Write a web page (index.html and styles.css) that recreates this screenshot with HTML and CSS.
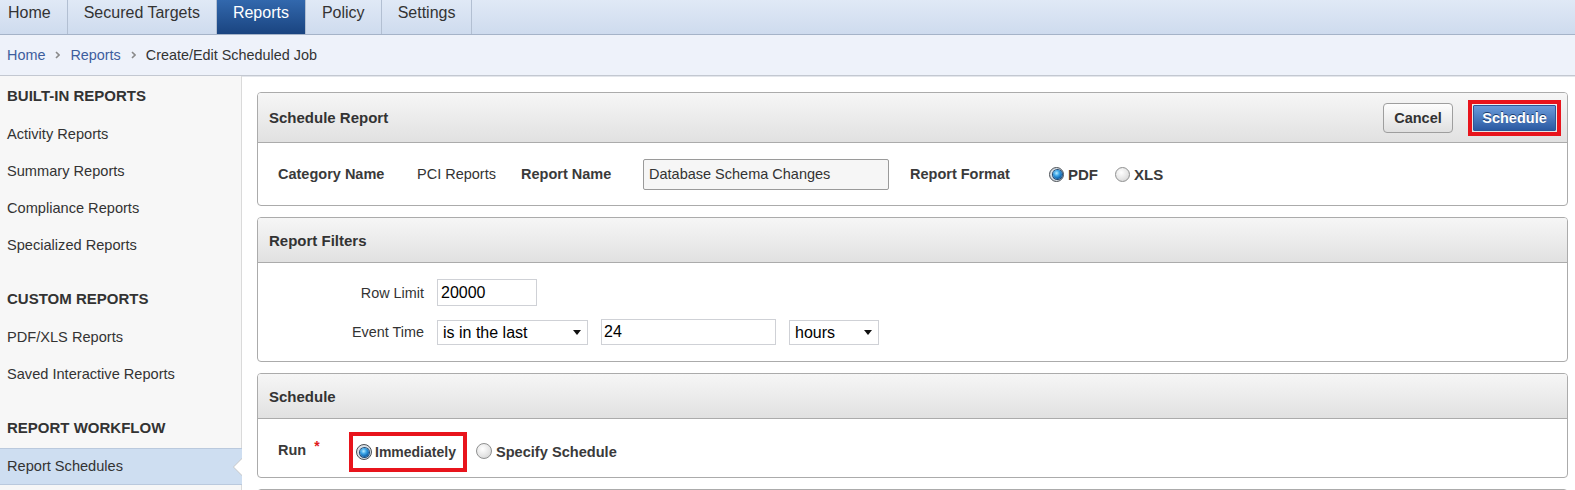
FILE: index.html
```html
<!DOCTYPE html>
<html lang="en">
<head>
<meta charset="utf-8">
<title>Create/Edit Scheduled Job</title>
<link rel="stylesheet" href="styles.css">
</head>
<body>
<nav class="topnav">
  <a class="tab tab-first">Home</a>
  <a class="tab">Secured Targets</a>
  <a class="tab tab-active">Reports</a>
  <a class="tab">Policy</a>
  <a class="tab">Settings</a>
</nav>
<div class="crumbs">
  <a class="crumb-link">Home</a>
  <svg class="chev" width="5" height="8" viewBox="0 0 5 8"><path d="M1 1 L4 4 L1 7" fill="none" stroke="#8a8a8a" stroke-width="1.6"/></svg>
  <a class="crumb-link">Reports</a>
  <svg class="chev" width="5" height="8" viewBox="0 0 5 8"><path d="M1 1 L4 4 L1 7" fill="none" stroke="#8a8a8a" stroke-width="1.6"/></svg>
  <span class="crumb-current">Create/Edit Scheduled Job</span>
</div>
<div class="layout">
  <aside class="sidebar">
    <section class="side-section">
      <div class="side-head">BUILT-IN REPORTS</div>
      <a class="side-item">Activity Reports</a>
      <a class="side-item">Summary Reports</a>
      <a class="side-item">Compliance Reports</a>
      <a class="side-item">Specialized Reports</a>
    </section>
    <section class="side-section">
      <div class="side-head">CUSTOM REPORTS</div>
      <a class="side-item">PDF/XLS Reports</a>
      <a class="side-item">Saved Interactive Reports</a>
    </section>
    <section class="side-section">
      <div class="side-head">REPORT WORKFLOW</div>
      <a class="side-item side-active">Report Schedules</a>
    </section>
  </aside>
  <main class="content">
    <div class="panel">
      <div class="panel-head head-actions">
        <span class="panel-title">Schedule Report</span>
        <div class="actions">
          <button class="btn btn-cancel">Cancel</button>
          <span class="mark-box"><button class="btn btn-primary">Schedule</button></span>
        </div>
      </div>
      <div class="panel-body body-row">
        <span class="lbl cat-label">Category Name</span>
        <span class="cat-value">PCI Reports</span>
        <span class="lbl name-label">Report Name</span>
        <input class="name-input" type="text" value="Database Schema Changes">
        <span class="lbl format-label">Report Format</span>
        <span class="radio radio-on fmt-radio"></span><span class="lbl fmt-text">PDF</span>
        <span class="radio fmt-radio radio-gap"></span><span class="lbl fmt-text">XLS</span>
      </div>
    </div>
    <div class="panel">
      <div class="panel-head">
        <span class="panel-title">Report Filters</span>
      </div>
      <div class="panel-body filters">
        <label class="flabel">Row Limit</label>
        <div class="frow"><input class="field field-limit" type="text" value="20000"></div>
        <label class="flabel">Event Time</label>
        <div class="frow">
          <span class="select-wrap sel-op"><select class="field select"><option>is in the last</option></select></span>
          <input class="field field-num" type="text" value="24">
          <span class="select-wrap sel-unit"><select class="field select"><option>hours</option></select></span>
        </div>
      </div>
    </div>
    <div class="panel">
      <div class="panel-head">
        <span class="panel-title">Schedule</span>
      </div>
      <div class="panel-body run-row">
        <span class="lbl run-label">Run <span class="req">*</span></span>
        <span class="highlight">
          <span class="radio radio-on"></span><span class="lbl radio-text">Immediately</span>
        </span>
        <span class="radio radio-after"></span><span class="lbl radio-text specify">Specify Schedule</span>
      </div>
    </div>
    <div class="panel">
      <div class="panel-head"></div>
    </div>
  </main>
</div>
</body>
</html>
```

FILE: styles.css
```css
* { box-sizing: border-box; }

body {
  margin: 0;
  font-family: "Liberation Sans", Arial, sans-serif;
  font-size: 14px;
  color: #333;
  background: #fff;
}

/* top navigation */
.topnav {
  display: flex;
  height: 35px;
  background: linear-gradient(#e0e9f6, #cedbee);
  border-bottom: 1px solid #a5b3c8;
}
.tab {
  padding: 0 16px;
  line-height: 26px;
  font-size: 16px;
  color: #333;
  border-right: 1px solid #b2bfd2;
  text-decoration: none;
}
.tab-first { padding-left: 8px; }
.tab-active {
  background: linear-gradient(#3268ad, #1a4480);
  color: #fff;
}

/* breadcrumb */
.crumbs {
  height: 41px;
  display: flex;
  align-items: center;
  gap: 9px;
  padding-left: 7px;
  font-size: 14.4px;
  background: #eef2fa;
  border-bottom: 1px solid #c3c8d1;
  box-shadow: 0 1px 0 #e3e6eb;
}
.crumb-link { color: #3d5d9d; text-decoration: none; }
.crumb-current { color: #333; }
.chev { display: block; margin: 0 1px; }

/* layout */
.layout { display: flex; }

.sidebar {
  width: 242px;
  flex: none;
  min-height: calc(100vh - 76px);
  background: #f7f7f7;
  border-right: 1px solid #dadada;
}
.side-section + .side-section { margin-top: 15px; }
.side-head {
  height: 40px;
  line-height: 40px;
  padding-left: 7px;
  font-size: 15px;
  font-weight: bold;
  color: #333;
}
.side-item {
  display: block;
  height: 37px;
  line-height: 37px;
  padding-left: 7px;
  font-size: 14.6px;
  color: #333;
  text-decoration: none;
}
.side-active {
  position: relative;
  margin-right: -1px;
  line-height: 35px;
  background: #cedef1;
  border-top: 1px solid #bac9dd;
  border-bottom: 1px solid #bac9dd;
}
.side-active::before,
.side-active::after {
  content: "";
  position: absolute;
  top: 50%;
  width: 0;
  height: 0;
  border-style: solid;
  border-color: transparent;
}
.side-active::before {
  right: 0;
  margin-top: -9px;
  border-width: 9px 9px 9px 0;
  border-right-color: #c8c8c8;
}
.side-active::after {
  right: 0;
  margin-top: -8px;
  border-width: 8px 8px 8px 0;
  border-right-color: #fff;
}

/* main content */
.content {
  flex: 1;
  min-width: 0;
  padding: 16px 7px 0 15px;
  display: flex;
  flex-direction: column;
  gap: 11px;
}

.panel {
  border: 1px solid #ababab;
  border-radius: 4px;
  background: #fff;
}
.panel-head {
  height: 45px;
  display: flex;
  align-items: center;
  justify-content: space-between;
  padding: 0 11px;
  background: linear-gradient(#f6f6f6, #e1e1e1);
  border-bottom: 1px solid #ababab;
  border-radius: 3px 3px 0 0;
}
.head-actions { height: 50px; }
.panel-title { font-size: 15px; font-weight: bold; color: #333; }

.actions { display: flex; align-items: center; gap: 15px; margin-right: -5px; }
.btn {
  font-family: "Liberation Sans", Arial, sans-serif;
  font-size: 14.5px;
  font-weight: bold;
  padding: 0;
  cursor: pointer;
}
.btn-cancel {
  width: 70px;
  height: 30px;
  color: #333;
  background: linear-gradient(#fdfdfd, #e0e0e0);
  border: 1px solid #9e9e9e;
  border-radius: 4px;
}
.mark-box {
  display: block;
  margin-top: 1px;
  padding: 1px;
  border: 4px solid #e8141c;
}
.btn-primary {
  display: block;
  width: 83px;
  height: 26px;
  color: #fff;
  background: linear-gradient(#6a9bda, #2b5aa2);
  border: 1px solid #2d5796;
  border-radius: 1px;
  text-shadow: 0 -1px 0 #1d3f70;
}

/* panel 1 body */
.body-row {
  height: 62px;
  display: flex;
  align-items: center;
  padding-left: 20px;
  font-size: 14.5px;
}
.lbl { font-weight: bold; color: #3a3a3a; }
.cat-label { width: 139px; }
.cat-value { width: 104px; color: #333; }
.name-label { width: 122px; }
.name-input {
  width: 246px;
  height: 31px;
  padding: 0 5px;
  font-family: "Liberation Sans", Arial, sans-serif;
  font-size: 14.5px;
  color: #333;
  background: #f6f6f6;
  border: 1px solid #9a9a9a;
  border-radius: 2px;
}
.format-label { width: 139px; margin-left: 21px; }
.fmt-radio { width: 16px; height: 16px; }
.fmt-radio.radio-on::after { left: 2.5px; top: 2.5px; }
.fmt-text { margin-left: 4px; font-size: 15px; }
.radio-gap { margin-left: 17px; }
.radio-text { margin-left: 3px; }

/* radios */
.radio {
  position: relative;
  flex: none;
  width: 15px;
  height: 15px;
  border-radius: 50%;
  border: 1px solid #8f9090;
  background: radial-gradient(circle at 40% 35%, #ffffff 0, #e6e6e6 55%, #cdcdcd 100%);
}
.radio-on {
  border-color: #4a4f55;
  background: radial-gradient(circle, #e9eef2 0, #cfd6dc 100%);
}
.radio-on::after {
  content: "";
  position: absolute;
  left: 2px;
  top: 2px;
  width: 9px;
  height: 9px;
  border-radius: 50%;
  background: radial-gradient(circle at 40% 35%, #b8ecff 0, #39a3e6 35%, #0d5fa8 70%, #0a3d72 100%);
  box-shadow: 0 0 0 1px #1f4c78;
}

/* filters */
.filters {
  display: grid;
  grid-template-columns: 166px auto;
  column-gap: 13px;
  row-gap: 13px;
  align-items: center;
  padding: 16px 0;
}
.flabel { text-align: right; color: #333; font-size: 14.4px; }
.frow { display: flex; align-items: center; gap: 13px; }
.field {
  font-family: "Liberation Sans", Arial, sans-serif;
  font-size: 16px;
  color: #000;
  background: #fff;
  border: 1px solid #cfd1d6;
  border-radius: 0;
}
.field-limit { width: 100px; height: 27px; padding: 0 3px; }
.field-num { width: 175px; height: 26px; padding: 0 2px; }
.select-wrap { position: relative; display: block; }
.select-wrap::after {
  content: "";
  position: absolute;
  right: 7px;
  top: 50%;
  margin-top: -2px;
  border-left: 4px solid transparent;
  border-right: 4px solid transparent;
  border-top: 5px solid #111;
}
.select {
  display: block;
  height: 25px;
  padding: 0 5px;
  -webkit-appearance: none;
  appearance: none;
}
.sel-op .select { width: 151px; }
.sel-unit .select { width: 90px; }

/* schedule row */
.run-row {
  height: 58px;
  display: flex;
  align-items: center;
  padding-left: 20px;
}
.run-label { width: 71px; margin-top: 4px; font-size: 14.5px; }
.req {
  color: #e01b1b;
  font-size: 14px;
  margin-left: 4px;
  position: relative;
  top: -4px;
}
.highlight {
  display: flex;
  align-items: center;
  height: 40px;
  margin-top: 8px;
  padding: 0 7px 0 3px;
  border: 4px solid #e8141c;
}
.highlight .radio { width: 16px; height: 16px; }
.highlight .radio-on::after { left: 2.5px; top: 2.5px; }
.radio-after { margin-left: 9px; margin-top: 6px; width: 16px; height: 16px; }
.run-row > .radio-text { margin-top: 8px; margin-left: 4px; }
.specify { font-size: 14.6px; }
```
